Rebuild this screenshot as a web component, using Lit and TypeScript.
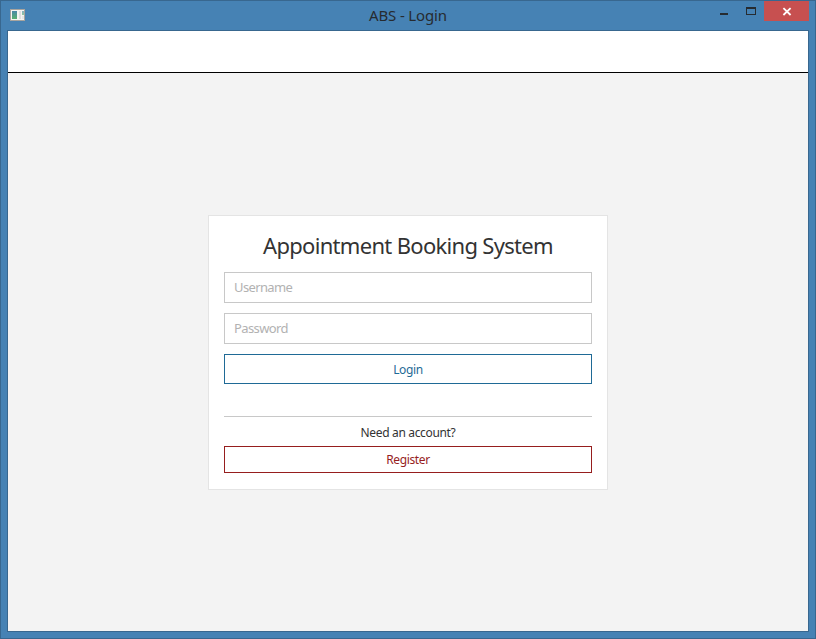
import { LitElement, html, css } from "lit";
import { customElement } from "lit/decorators.js";

@customElement("app-root")
export class AppRoot extends LitElement {
  static styles = css`
    :host {
      display: block;
      height: 639px;
      font-family: "Noto Sans", "Open Sans", sans-serif;
      color: #333;
    }
    * { box-sizing: border-box; }
    .window {
      width: 816px;
      height: 639px;
      background: #4682b4;
      border: 1px solid #38678f;
      padding: 0 6px 6px;
      display: flex;
      flex-direction: column;
    }
    .titlebar {
      height: 29px;
      flex: none;
      display: grid;
      grid-template-columns: 120px 1fr 120px;
      align-items: start;
    }
    .app-icon { display: block; margin: 8px 0 0 3px; }
    .caption {
      text-align: center;
      font-size: 15px;
      line-height: 29px;
      color: #262b30;
      letter-spacing: -0.15px;
    }
    .controls { display: block; justify-self: end; }
    .content {
      width: 802px;
      height: 602px;
      border: 1px solid #38678f;
      background: #f3f3f3;
      display: flex;
      flex-direction: column;
    }
    .header {
      height: 42px;
      flex: none;
      background: #fff;
      border-bottom: 1px solid #000;
    }
    .main {
      flex: 1;
      display: flex;
      justify-content: center;
      align-items: center;
    }
    .card {
      width: 400px;
      height: 275px;
      background: #fff;
      border: 1px solid #e4e4e4;
      padding: 14px 15px 0;
      display: flex;
      flex-direction: column;
    }
    h1 {
      margin: 0 0 10px;
      font-weight: 400;
      font-size: 22px;
      line-height: 31px;
      height: 32px;
      text-align: center;
      white-space: nowrap;
      letter-spacing: -0.69px;
    }
    input {
      height: 31px;
      margin: 0 0 10px;
      padding: 0 9px;
      border: 1px solid #c8c8c8;
      border-radius: 0;
      background: #fff;
      font-family: inherit;
      font-size: 13px;
      letter-spacing: -0.62px;
      outline: none;
    }
    input::placeholder { color: #b2b2b2; opacity: 1; }
    button {
      padding: 0;
      background: #fff;
      border: 1px solid;
      border-radius: 0;
      font-family: inherit;
      font-size: 12px;
      letter-spacing: -0.35px;
    }
    .login { height: 30px; padding-top: 2px; color: #1f6a96; border-color: #1f6a96; }
    .register { height: 27px; color: #961e1e; border-color: #961e1e; }
    .separator { height: 1px; background: #c8c8c8; margin-top: 32px; }
    .hint {
      height: 29px;
      line-height: 31px;
      font-size: 12px;
      letter-spacing: -0.34px;
      text-align: center;
    }
  `;

  render() {
    return html`
      <div class="window">
        <div class="titlebar">
          <svg class="app-icon" width="15" height="12" viewBox="0 0 15 12" shape-rendering="crispEdges">
            <defs>
              <linearGradient id="g" x1="0" y1="0" x2="0" y2="1">
                <stop offset="0" stop-color="#4a88a8" />
                <stop offset="1" stop-color="#58b070" />
              </linearGradient>
            </defs>
            <rect x="0.5" y="0.5" width="14" height="11" fill="#f4f4f2" stroke="#a8a49e" />
            <rect x="2" y="2" width="5" height="8" fill="url(#g)" />
            <rect x="9" y="2" width="2" height="8" fill="#dedede" />
            <rect x="12" y="2" width="2" height="4" fill="url(#g)" opacity="0.65" />
            <rect x="12" y="7" width="2" height="3" fill="#e6e6e6" />
          </svg>
          <div class="caption">ABS - Login</div>
          <svg class="controls" width="90" height="20" viewBox="719 1 90 20">
            <rect x="720" y="13" width="8" height="2" fill="#262b30" />
            <path d="M746 7h10v8h-10zM747 9v5h8v-5z" fill="#262b30" fill-rule="evenodd" />
            <rect x="764" y="1" width="45" height="20" fill="#c75050" />
            <path d="M783.4 8.2l7.2 6.8M790.6 8.2l-7.2 6.8" stroke="#fff" stroke-width="1.8" />
          </svg>
        </div>
        <div class="content">
          <div class="header"></div>
          <div class="main">
            <div class="card">
              <h1>Appointment Booking System</h1>
              <input type="text" placeholder="Username" />
              <input type="password" placeholder="Password" />
              <button class="login">Login</button>
              <div class="separator"></div>
              <div class="hint">Need an account?</div>
              <button class="register">Register</button>
            </div>
          </div>
        </div>
      </div>
    `;
  }
}
